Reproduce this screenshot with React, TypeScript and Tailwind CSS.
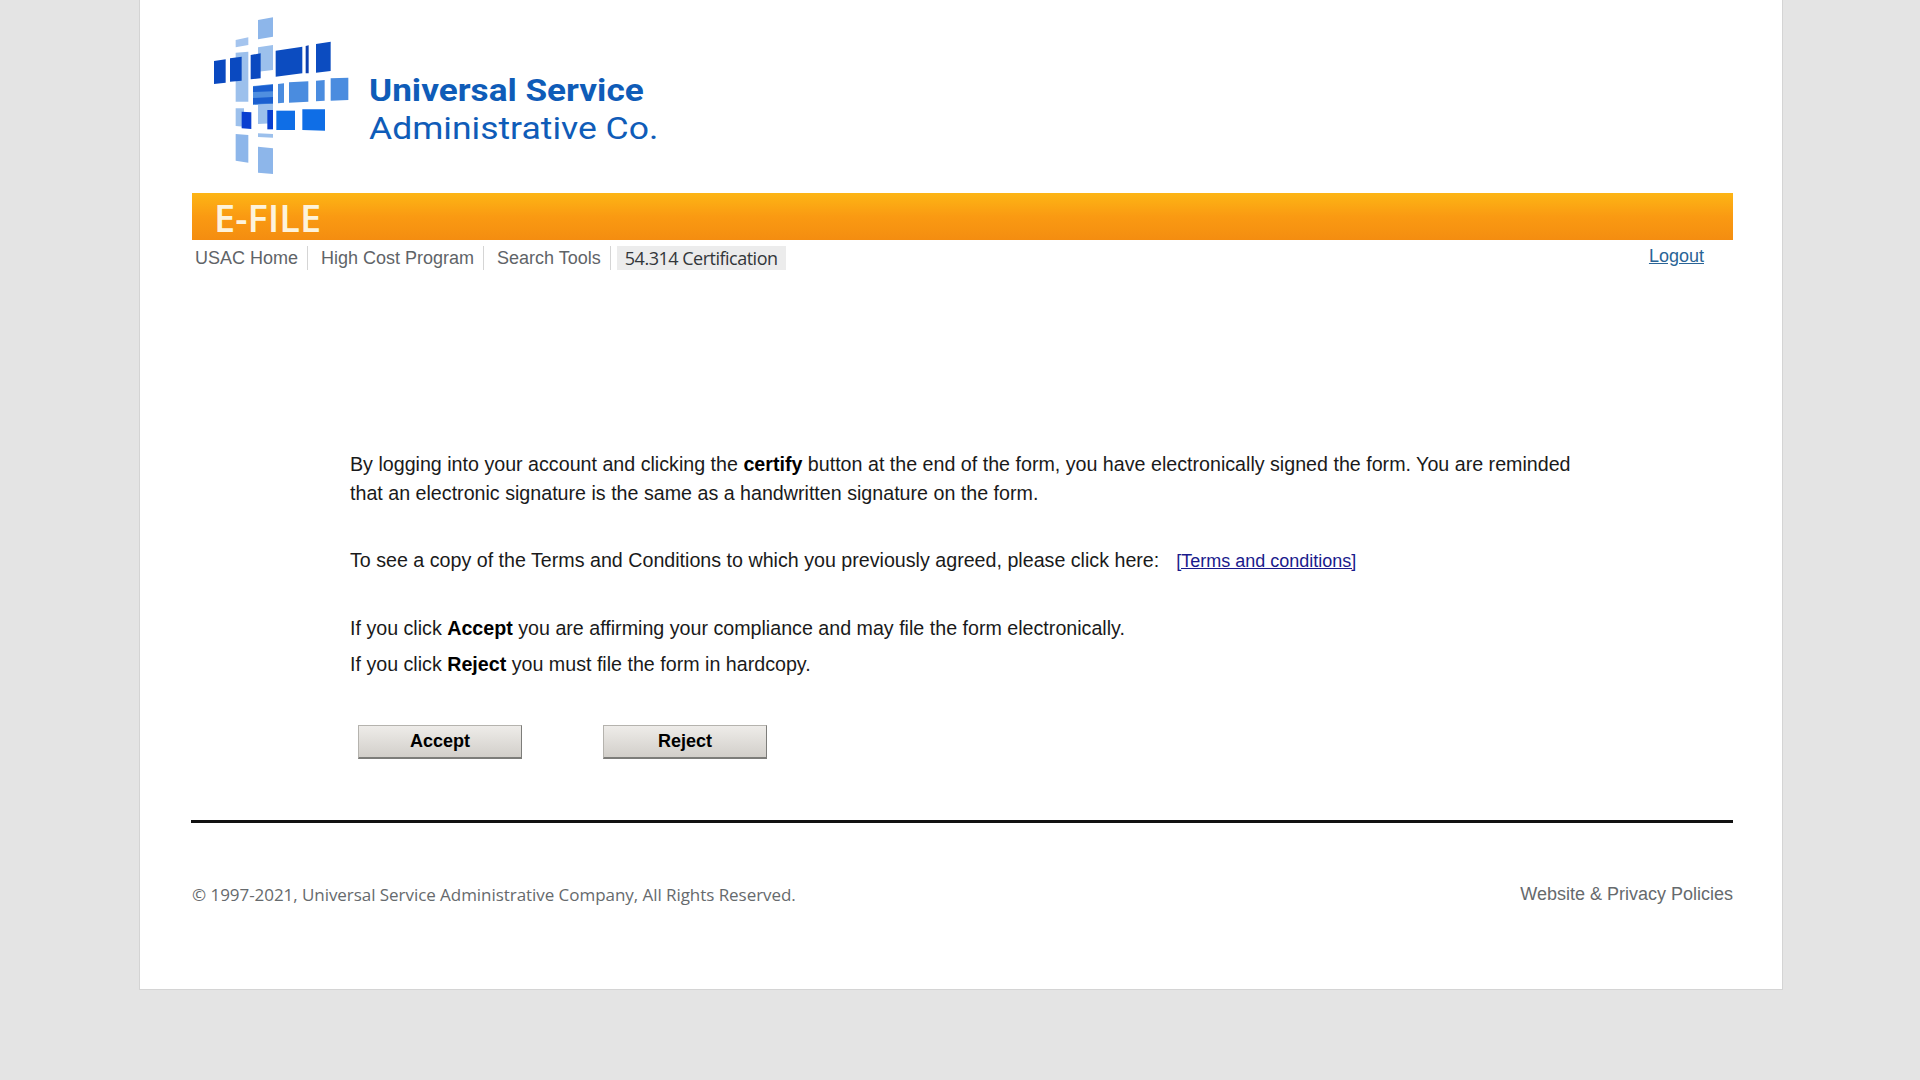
const arial = "font-['Liberation_Sans',Arial,sans-serif]";

// logo pieces as polygons, in 3x zoom coordinates
const logoShapes: [string, string][] = [
	["207,60 252,52 252,110 207,118", "#8db6ea"],
	["140,120 178,112 178,135 140,142", "#a4c4ee"],
	["207,142 252,135 252,210 207,215", "#9cc0ec"],
	["140,158 178,155 178,305 140,305", "#9cc0ec"],
	["207,315 252,312 252,370 207,372", "#9cc0ec"],
	["75,183 110,178 110,248 75,252", "#0a49c0"],
	["123,175 158,170 158,242 123,245", "#0a49c0"],
	["185,165 215,160 215,235 185,238", "#0a49c0"],
	["260,152 340,140 340,220 260,230", "#0c4cc0"],
	["350,138 359,136 359,220 350,220", "#0c3fb0"],
	["381,132 425,125 425,213 381,218", "#0c4cc0"],
	["192,258 252,252 252,312 192,315", "#4f8fe0"],
	["192,260 252,254 252,274 192,276", "#1a5fd0"],
	["192,294 252,291 252,310 192,312", "#1a5fd0"],
	["267,252 285,250 285,308 267,310", "#4a8cdf"],
	["300,247 358,244 358,305 300,308", "#4a8cdf"],
	["381,242 407,240 407,302 381,304", "#4a8cdf"],
	["425,235 478,233 478,300 425,302", "#4a8cdf"],
	["140,325 165,325 165,380 140,378", "#9cc0ec"],
	["158,335 187,337 187,387 158,385", "#0a3fd0"],
	["235,330 252,330 252,388 235,388", "#0a3fd0"],
	["262,332 318,332 318,390 262,390", "#0f6ee6"],
	["340,328 408,328 408,392 340,390", "#0f6ee6"],
	["207,400 252,402 252,413 207,411", "#9cc0ec"],
	["140,402 178,405 178,488 140,482", "#8db6ea"],
	["207,440 252,445 252,522 207,518", "#8db6ea"],
];

function Logo() {
	return (
		<svg viewBox="0 0 1500 570" className="w-[500px] h-[190px] block -mb-[3px] ml-[-2px]">
			{logoShapes.map(([points, fill], i) => (
				<polygon key={i} points={points} fill={fill} />
			))}
			<text x="540" y="302" fontFamily="Roboto, sans-serif" fontWeight="700" fontSize="96" fill="#0f5cb8" textLength="824" lengthAdjust="spacingAndGlyphs">
				Universal Service
			</text>
			<text x="540" y="418" fontFamily="Roboto, sans-serif" fontWeight="400" fontSize="96" fill="#0f5cb8" textLength="868" lengthAdjust="spacingAndGlyphs">
				Administrative Co.
			</text>
		</svg>
	);
}

function NavItem({ label }: { label: string }) {
	return (
		<span className="h-[24px] leading-[24px] pr-[9px] mr-[13px] text-[18px] text-[#5f6468] border-r border-[#d5d5d5]">
			{label}
		</span>
	);
}

function FormButton({ label }: { label: string }) {
	return (
		<button className="w-[164px] h-[34px] bg-gradient-to-b from-[#eeece9] to-[#d2cfca] border border-[#b5b3ae] border-r-[#7d7d7a] border-b-2 border-b-[#7d7d7a] text-[18px] font-bold text-black">
			{label}
		</button>
	);
}

export default function App() {
	return (
		<div className={`min-h-[1080px] bg-[#e4e4e4] ${arial}`}>
			<div className="ml-[139px] w-[1644px] h-[990px] bg-white border-x border-b border-[#d4d4d4] pl-[51px] pr-[49px]">
				<div className="h-[193px]">
					<Logo />
				</div>

				<div className="h-[47px] ml-[1px] bg-gradient-to-b from-[#fdb515] via-[#fa9a12] to-[#f48d10] flex items-center pl-[22px]">
					<span className="font-['Open_Sans',sans-serif] font-semibold text-[38px] leading-none text-[#fdf3dc] mt-[1px]">E-FILE</span>
				</div>

				<div className="flex items-start justify-between h-[24px] mt-[6px] ml-[4px]">
					<div className="flex items-center">
						<NavItem label="USAC Home" />
						<NavItem label="High Cost Program" />
						<NavItem label="Search Tools" />
						<span className="-ml-[7px] h-[24px] leading-[24px] px-[8px] bg-[#ececec] text-[18px] text-[#33373a] font-['Open_Sans',sans-serif] tracking-[-0.5px]">
							54.314 Certification
						</span>
					</div>
					<a href="#" className="mr-[29px] text-[18px] leading-[20px] text-[#2a6496] underline">
						Logout
					</a>
				</div>

				<div className="pl-[159px] pt-[180px] text-[19.67px] text-[#1a1a1a]">
					<p className="w-[1240px] leading-[29px]">
						By logging into your account and clicking the <b className="text-black">certify</b> button at the end of the form, you have electronically signed the form. You are reminded that an electronic signature is the same as a handwritten signature on the form.
					</p>
					<p className="mt-[38px] leading-[29px]">
						To see a copy of the Terms and Conditions to which you previously agreed, please click here:
						<a href="#" className="ml-[17px] text-[#1a1a8c] underline text-[18px]">[Terms and conditions]</a>
					</p>
					<p className="mt-[38px] leading-[29px]">
						If you click <b className="text-black">Accept</b> you are affirming your compliance and may file the form electronically.
					</p>
					<p className="mt-[7px] leading-[29px]">
						If you click <b className="text-black">Reject</b> you must file the form in hardcopy.
					</p>
					<div className="flex gap-[81px] mt-[46px] ml-[8px]">
						<FormButton label="Accept" />
						<FormButton label="Reject" />
					</div>
				</div>

				<div className="h-[3px] bg-[#111] mt-[61px]" />

				<div className="flex items-center justify-between mt-[58px] ml-[1px] text-[#666a6d]">
					<span className="font-['Open_Sans',sans-serif] text-[17px] tracking-[-0.05px]">© 1997-2021, Universal Service Administrative Company, All Rights Reserved.</span>
					<span className="text-[18px]">Website &amp; Privacy Policies</span>
				</div>
			</div>
		</div>
	);
}
